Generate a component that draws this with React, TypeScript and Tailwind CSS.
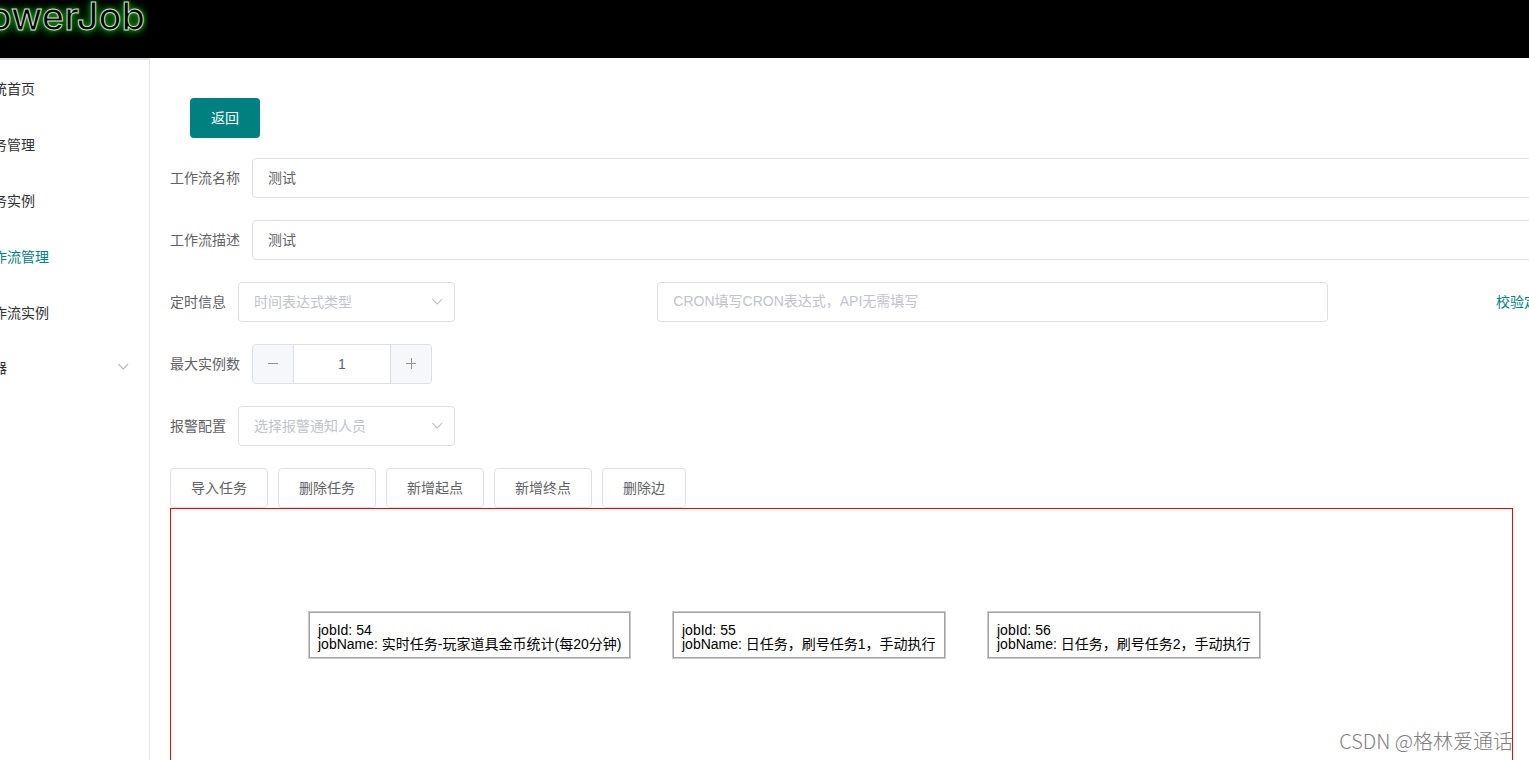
import { useState } from "react";
import type { ReactNode } from "react";

interface Job {
  id: number;
  name: string;
  x: number;
  y: number;
}

const MENU = ["系统首页", "任务管理", "任务实例", "工作流管理", "工作流实例"];
const ACTIVE = "工作流管理";

const ACTIONS = ["导入任务", "删除任务", "新增起点", "新增终点", "删除边"];

const JOBS: Job[] = [
  { id: 54, name: "实时任务-玩家道具金币统计(每20分钟)", x: 138, y: 103 },
  { id: 55, name: "日任务，刷号任务1，手动执行", x: 502, y: 103 },
  { id: 56, name: "日任务，刷号任务2，手动执行", x: 817, y: 103 },
];

const inputClass =
  "h-10 w-full rounded border border-[#dcdfe6] bg-white px-[15px] pb-[2px] text-sm text-[#606266] outline-none placeholder:text-[#c0c4cc] placeholder:opacity-100";

function Chevron({ className }: { className?: string }) {
  return (
    <svg
      viewBox="0 0 12 8"
      className={`h-2 w-3 ${className ?? ""}`}
      fill="none"
      stroke="currentColor"
      strokeWidth="1.1"
      strokeLinecap="round"
      strokeLinejoin="round"
    >
      <path d="M1.6 1.4 6.2 6 10.8 1.4" />
    </svg>
  );
}

function FormItem({ id, label, children }: { id: string; label: string; children: ReactNode }) {
  return (
    <div className="mb-[22px] flex items-center">
      <label htmlFor={id} className="shrink-0 pr-3 text-sm text-[#606266]">
        {label}
      </label>
      {children}
    </div>
  );
}

function SelectBox({ id, placeholder }: { id: string; placeholder: string }) {
  return (
    <div className="relative w-[217px]">
      <select
        id={id}
        className="h-10 w-full appearance-none rounded border border-[#dcdfe6] bg-white pr-8 pl-[15px] text-sm text-[#c0c4cc] outline-none"
      >
        <option>{placeholder}</option>
      </select>
      <Chevron className="pointer-events-none absolute top-4 right-3 text-[#c0c4cc]" />
    </div>
  );
}

function JobNode({ job }: { job: Job }) {
  return (
    <div
      className="absolute border border-[#a3a3a3] bg-white px-2 pt-[10px] pb-[6px] text-sm leading-[14px] whitespace-nowrap text-black ring-1 ring-[#c9c9c9]"
      style={{ left: job.x, top: job.y }}
    >
      <p>jobId: {job.id}</p>
      <p>jobName: {job.name}</p>
    </div>
  );
}

export default function App() {
  const [name, setName] = useState("测试");
  const [desc, setDesc] = useState("测试");
  const [count, setCount] = useState(1);

  return (
    <div className="relative h-screen overflow-hidden bg-white font-['Liberation_Sans','Noto_Sans_CJK_SC',sans-serif]">
      {/* the shell is wider than the window and sits scrolled to the right */}
      <div className="-ml-[50px] w-[calc(100%+121px)]">
        <header className="h-[58px] bg-black">
          <div className="flex h-10 w-[198px] justify-end overflow-hidden pr-[3px] font-[Inter] text-[38px] leading-[32px] font-medium whitespace-nowrap text-black [-webkit-text-stroke:1px_#d4dcd4] [text-shadow:0_0_4px_#0f9a0f,0_0_8px_#0c860c,0_2px_10px_#0a700a]">
            PowerJob
          </div>
        </header>

        <div className="flex">
          <nav className="h-screen w-[200px] shrink-0 border-t-2 border-r border-t-[#dcdfe6] border-r-[#e6e6e6]">
            {MENU.map((item) => (
              <a
                key={item}
                href="#"
                className={`flex h-14 items-center pt-[2px] pl-[29px] text-sm ${item === ACTIVE ? "text-[#008080]" : "text-[#303133]"}`}
              >
                {item}
              </a>
            ))}
            <button className="flex h-14 w-full items-center justify-between pr-5 pl-[29px] text-sm text-[#303133]">
              容器
              <Chevron className="mb-[2px] text-[#b4b6ba]" />
            </button>
          </nav>

          <main className="min-w-0 flex-1 px-5 pt-10">
            <button className="mb-5 ml-5 block h-10 rounded bg-[#008080] px-[21px] text-sm text-white">返回</button>

            <FormItem id="wf-name" label="工作流名称">
              <input id="wf-name" className={inputClass} value={name} onChange={(e) => setName(e.target.value)} />
            </FormItem>

            <FormItem id="wf-desc" label="工作流描述">
              <input id="wf-desc" className={inputClass} value={desc} onChange={(e) => setDesc(e.target.value)} />
            </FormItem>

            <FormItem id="wf-time" label="定时信息">
              <div className="grid flex-1 grid-cols-[1fr_2fr_auto] items-center">
                <SelectBox id="wf-time" placeholder="时间表达式类型" />
                <div className="w-4/5">
                  <input
                    aria-label="时间表达式"
                    className={inputClass}
                    placeholder="CRON填写CRON表达式，API无需填写"
                  />
                </div>
                <button className="text-sm text-[#008080]">校验定时参数</button>
              </div>
            </FormItem>

            <FormItem id="wf-max" label="最大实例数">
              <div className="flex h-10 w-[180px] overflow-hidden rounded border border-[#dcdfe6] text-sm text-[#606266]">
                <button
                  aria-label="减少"
                  className="flex w-[41px] shrink-0 items-center justify-center border-r border-[#dcdfe6] bg-[#f5f7fa]"
                  onClick={() => setCount(Math.max(0, count - 1))}
                >
                  <svg viewBox="0 0 12 12" className="size-3" stroke="#909399">
                    <path d="M1 5.5h10" />
                  </svg>
                </button>
                <input
                  id="wf-max"
                  className="w-full min-w-0 bg-white text-center outline-none"
                  value={count}
                  onChange={(e) => setCount(Number(e.target.value) || 0)}
                />
                <button
                  aria-label="增加"
                  className="flex w-[41px] shrink-0 items-center justify-center border-l border-[#dcdfe6] bg-[#f5f7fa]"
                  onClick={() => setCount(count + 1)}
                >
                  <svg viewBox="0 0 12 12" className="size-3" stroke="#909399">
                    <path d="M1 5.5h10M6.5 0v11" />
                  </svg>
                </button>
              </div>
            </FormItem>

            <FormItem id="wf-alarm" label="报警配置">
              <SelectBox id="wf-alarm" placeholder="选择报警通知人员" />
            </FormItem>

            <div className="flex gap-[10px]">
              {ACTIONS.map((action) => (
                <button
                  key={action}
                  className="h-10 rounded border border-[#dcdfe6] bg-white px-5 text-sm text-[#606266]"
                >
                  {action}
                </button>
              ))}
            </div>

            <div className="relative mr-[67px] h-[500px] border border-[#ff0000]">
              {JOBS.map((job) => (
                <JobNode key={job.id} job={job} />
              ))}
            </div>
          </main>
        </div>
      </div>

      <p className="absolute right-4 bottom-[5px] font-['Noto_Sans_CJK_SC',sans-serif] text-xl font-light text-[#808080]">
        CSDN @格林爱通话
      </p>
    </div>
  );
}
